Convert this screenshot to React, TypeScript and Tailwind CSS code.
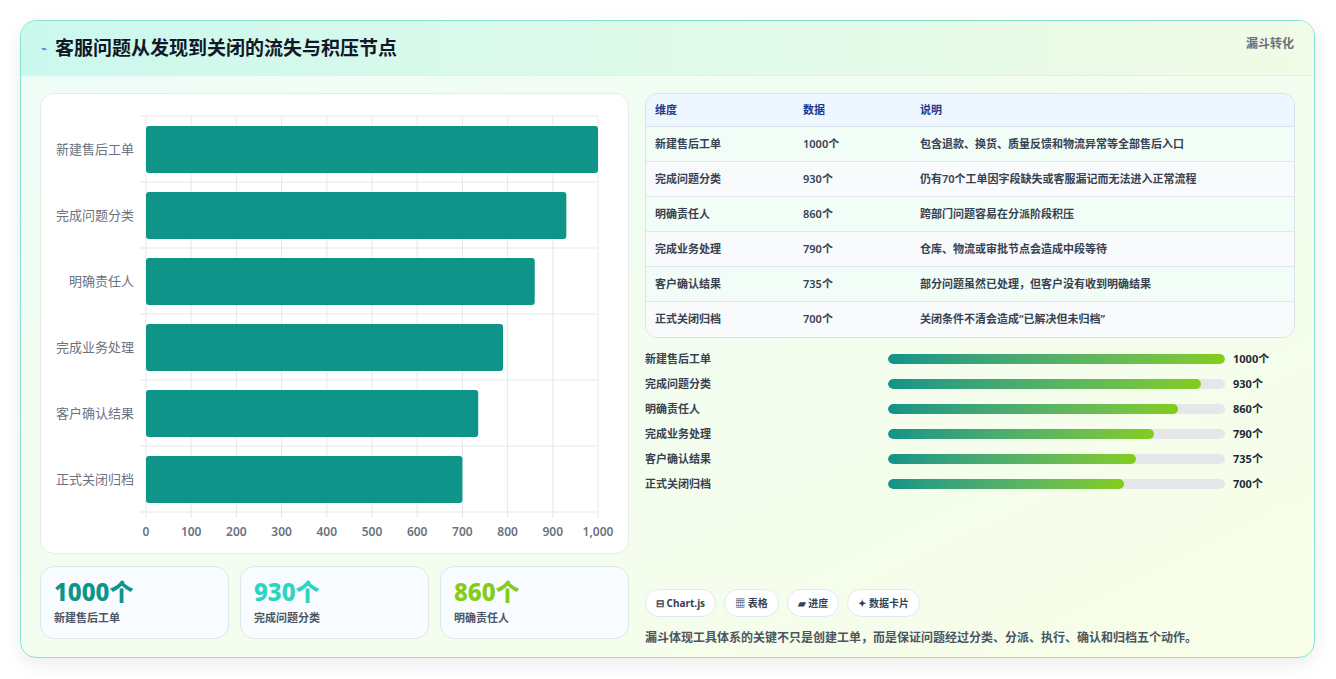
import React from "react";

const data = [
  ["新建售后工单", 1000, "包含退款、换货、质量反馈和物流异常等全部售后入口"],
  ["完成问题分类", 930, "仍有70个工单因字段缺失或客服漏记而无法进入正常流程"],
  ["明确责任人", 860, "跨部门问题容易在分派阶段积压"],
  ["完成业务处理", 790, "仓库、物流或审批节点会造成中段等待"],
  ["客户确认结果", 735, "部分问题虽然已处理，但客户没有收到明确结果"],
  ["正式关闭归档", 700, "关闭条件不清会造成“已解决但未归档”"],
] as const;

function Chart() {
  const x0 = 105, x1 = 557, y0 = 22, band = 66;
  const sx = (v: number) => x0 + ((x1 - x0) * v) / 1000;
  return (
    <svg width="589" height="460" className="block">
      {Array.from({ length: 11 }).map((_, i) => (
        <g key={i}>
          <line x1={sx(i * 100)} x2={sx(i * 100)} y1={y0} y2={y0 + band * 6 + 6} stroke="#e5e7eb" />
          <text x={sx(i * 100)} y={442} fontSize="12" fontWeight="600" fill="#6b7280" textAnchor="middle">
            {i === 10 ? "1,000" : i * 100}
          </text>
        </g>
      ))}
      {Array.from({ length: 7 }).map((_, i) => (
        <line key={i} x1={x0 - 6} x2={x1} y1={y0 + band * i} y2={y0 + band * i} stroke="#e5e7eb" />
      ))}
      {data.map(([n, v], i) => (
        <g key={n}>
          <rect x={x0} y={y0 + band * i + 10} width={sx(v) - x0} height={47} rx={3} fill="#0e9488" />
          <text x={x0 - 12} y={y0 + band * i + 38} fontSize="13" fill="#6b7280" textAnchor="end">{n}</text>
        </g>
      ))}
    </svg>
  );
}

export default function App() {
  return (
    <div className="w-[1336px] h-[679px] bg-white p-[20px] pr-[21px] pb-[21px]" style={{ fontFamily: '"Noto Sans","Noto Sans CJK SC",sans-serif' }}>
      <div className="h-[638px] rounded-[16px] border border-[#86e3cf] overflow-hidden shadow-[0_6px_18px_rgba(0,0,0,0.08)] bg-gradient-to-br from-[#effdf8] to-[#f7fee7] flex flex-col">
        <div className="h-[55px] shrink-0 flex items-center justify-between px-[20px] bg-gradient-to-r from-[#cbf8ee] to-[#f1fbe6] border-b border-[#d8f5ea]">
          <div className="flex items-center gap-[8px]">
            <span className="text-[#2563eb] text-[10px]">⌁</span>
            <span className="text-[19px] font-bold text-[#111827]">客服问题从发现到关闭的流失与积压节点</span>
          </div>
          <span className="text-[12px] font-bold text-[#6b7280] self-start mt-[14px]">漏斗转化</span>
        </div>
        <div className="flex gap-[16px] px-[19px] pt-[17px]">
          <div className="w-[589px] flex flex-col gap-[12px]">
            <div className="h-[461px] bg-white rounded-[14px] border border-[#e5ece9]"><Chart /></div>
            <div className="flex gap-[11px]">
              {[["1000个", "text-[#0e9488]", "新建售后工单"], ["930个", "text-[#2dd4bf]", "完成问题分类"], ["860个", "text-[#84cc16]", "明确责任人"]].map(([v, c, l]) => (
                <div key={l} className="w-[189px] h-[73px] rounded-[14px] border border-[#dbeae6] bg-[#f8fbff] px-[13px] pt-[9px]">
                  <div className={`text-[24px] font-extrabold leading-[32px] ${c}`}>{v}</div>
                  <div className="text-[11px] font-semibold text-[#4b5563] mt-[2px]">{l}</div>
                </div>
              ))}
            </div>
          </div>
          <div className="flex-1 flex flex-col">
            <div className="rounded-[12px] border border-[#d7e3ea] overflow-hidden text-[11px] font-semibold text-[#374151]">
              <div className="flex h-[33px] items-center bg-[#eef6ff] text-[#1e3a8a] border-b border-[#d7e3ea]">
                <div className="w-[157px] pl-[9px]">维度</div><div className="w-[117px]">数据</div><div>说明</div>
              </div>
              {data.map(([n, v, d], i) => (
                <div key={n} className={`flex h-[35px] items-center ${i % 2 ? "bg-[#f8fafc]" : "bg-[#f1fdf6]"} ${i < 5 ? "border-b border-[#e2e8f0]" : ""}`}>
                  <div className="w-[157px] pl-[9px]">{n}</div><div className="w-[117px]">{v}个</div><div>{d}</div>
                </div>
              ))}
            </div>
            <div className="flex flex-col gap-[7px] mt-[12px]">
              {data.map(([n, v]) => (
                <div key={n} className="flex items-center h-[18px] text-[11px] font-semibold text-[#374151]">
                  <div className="w-[243px]">{n}</div>
                  <div className="w-[337px] h-[10px] rounded-full bg-[#e5e7eb] overflow-hidden">
                    <div className="h-full rounded-full bg-gradient-to-r from-[#0e9488] to-[#84cc16]" style={{ width: `${v / 10}%` }} />
                  </div>
                  <div className="ml-[8px] font-bold text-[#1f2937]">{v}个</div>
                </div>
              ))}
            </div>
            <div className="flex gap-[8px] mt-[96px]">
              {["⊟ Chart.js", "▦ 表格", "▰ 进度", "✦ 数据卡片"].map(t => (
                <span key={t} className="h-[28px] px-[10px] rounded-full border border-[#e2e8f0] bg-white flex items-center text-[10px] font-bold text-[#374151]">{t}</span>
              ))}
            </div>
            <div className="mt-[12px] text-[12px] font-semibold text-[#4b5563]">漏斗体现工具体系的关键不只是创建工单，而是保证问题经过分类、分派、执行、确认和归档五个动作。</div>
          </div>
        </div>
      </div>
    </div>
  );
}
